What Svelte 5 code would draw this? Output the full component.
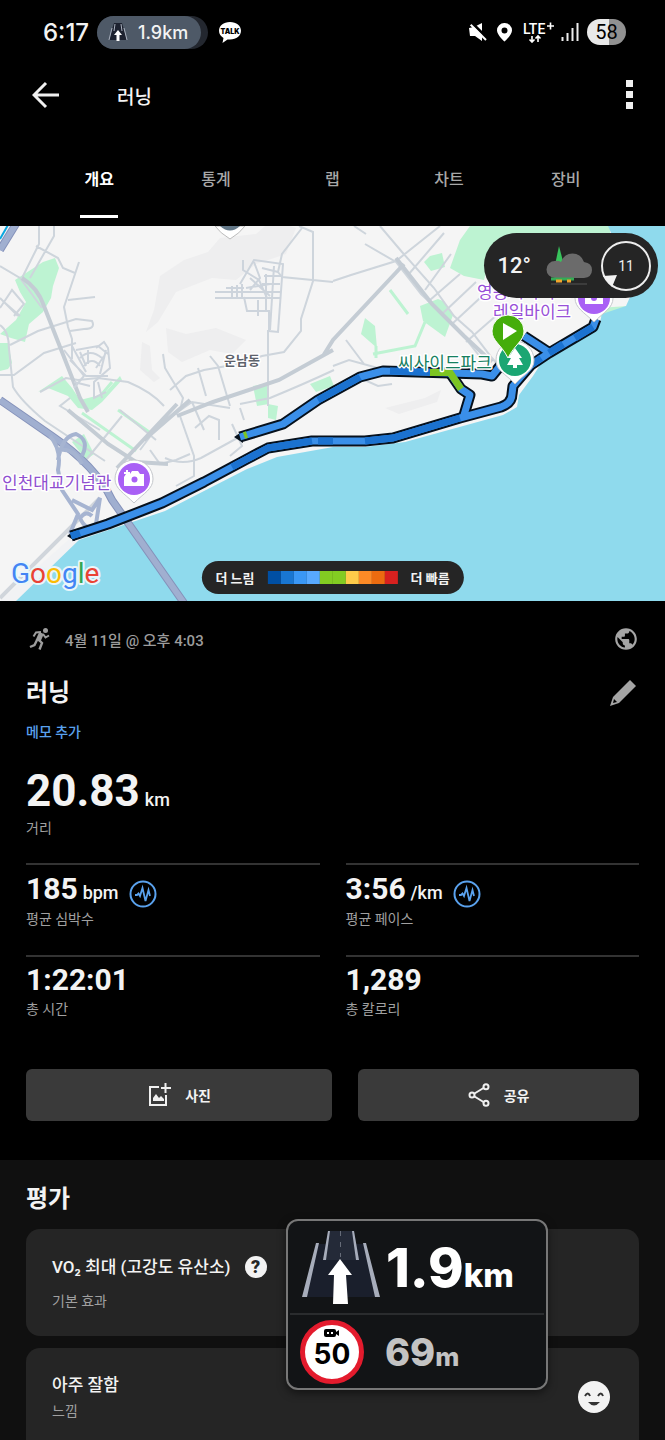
<script>
	let selected = 'overview';

	const tabs = [
		{ id: 'overview', label: '개요' },
		{ id: 'stats', label: '통계' },
		{ id: 'laps', label: '랩' },
		{ id: 'charts', label: '차트' },
		{ id: 'gear', label: '장비' }
	];

	const paceColors = ['#004fa3', '#1976d2', '#3a97f5', '#58a9ff', '#83cc22', '#83cc22', '#fecb4a', '#fd8a26', '#eb6b10', '#d7211f'];

	const stats = [
		{ value: '185', unit: 'bpm', label: '평균 심박수', chart: true },
		{ value: '3:56', unit: '/km', label: '평균 페이스', chart: true },
		{ value: '1:22:01', label: '총 시간' },
		{ value: '1,289', label: '총 칼로리' }
	];

	// route pieces, drawn once in black and again in the pace colour
	const shoreRoute = 'M71 536 L108 524 L162 503 L204 482 L247 459 L268 448 L312 441 L365 441 L393 438 L460 418 L501 407 Q512 403 512 394 L513 386 L531 365 L549 353 L593 327 L596 319';
	const innerRoute = 'M240 437 L283 424 L318 400 L360 377 L383 371 L450 373 L482 374 L492 376 L500 366';
	const linkRoute = 'M450 373 L461 389 L470 395 L464 415';
	const northRoute = 'M524 336 L550 353';
</script>

<svelte:head>
	<title>러닝</title>
</svelte:head>

<div class="screen">
	<div class="status">
		<span class="clock">6:17</span>
		<div class="chip">
			<div class="chip-inner">
				<svg width="20" height="20" viewBox="0 0 20 20">
					<path d="M6 1h8l5 17H1z" fill="#1d2230" />
					<path d="M4 6L1 18M16 6l3 12M7 2L6 9M13 2l1 7" stroke="#aab2bf" fill="none" />
					<path d="M10 8l4 5h-2.500v6h-3v-6H6z" fill="#fff" />
				</svg>
				<span>1.9km</span>
			</div>
		</div>
		<svg class="talk" width="24" height="24" viewBox="0 0 24 24">
			<path d="M12 2C5.500 2 1 5.800 1 10.800c0 3 1.800 5.600 4.500 7.200L4.500 23l5-3.600c.8.1 1.600.2 2.500.2 6.500 0 11-3.900 11-8.800S18.500 2 12 2z" fill="#fff" />
			<text x="12" y="14" text-anchor="middle" font-size="7" font-weight="900">TALK</text>
		</svg>
		<div class="status-right">
			<svg width="20" height="20" viewBox="0 0 20 20">
				<path d="M1 6l5-1 8-4v18l-7-5H2z" fill="#fff" />
				<path d="M3 0l17 17" stroke="#000" stroke-width="3" />
				<path d="M1 1l17 17" stroke="#fff" stroke-width="2" />
				<path d="M0 0h6l-6 5z" fill="#000" />
			</svg>
			<svg width="17" height="20" viewBox="0 0 17 20">
				<path d="M8.500 1A7.300 7.300 0 0 0 1 8.500C1 13 8.500 19.500 8.500 19.500S16 13 16 8.500A7.300 7.300 0 0 0 8.500 1zm0 4.500a3 3 0 1 1 0 6 3 3 0 0 1 0-6z" fill="#fff" />
			</svg>
			<svg class="network" width="32" height="22" viewBox="0 0 32 22">
				<text x="0" y="13" fill="#fff" font-size="14" font-weight="500">LTE</text>
				<path d="M24 5h7M27.500 1.500v7" stroke="#fff" stroke-width="1.600" />
				<path d="M9 15v6M6.500 18.500L9 21l2.500-2.500M15 21v-6M12.500 17.500L15 15l2.500 2.500" stroke="#fff" stroke-width="1.600" fill="none" />
			</svg>
			<svg width="18" height="20" viewBox="0 0 18 20">
				<path d="M1.500 15v4M6.500 11v8M11.500 6v13M16.500 1v18" stroke="#eee" stroke-width="2" />
			</svg>
			<span class="battery">58</span>
		</div>
	</div>

	<header class="appbar">
		<button class="icon-btn" aria-label="뒤로">
			<svg width="28" height="28" viewBox="0 0 28 28">
				<path d="M27 14H3M14 2L2 14l12 12" stroke="#f0f0f0" stroke-width="3" fill="none" />
			</svg>
		</button>
		<span class="page-title">러닝</span>
		<button class="icon-btn more" aria-label="더보기">
			<svg width="7" height="30" viewBox="0 0 7 30">
				<path d="M0 0h7v7H0zM0 11h7v7H0zM0 22h7v7H0z" fill="#f0f0f0" />
			</svg>
		</button>
	</header>

	<nav class="tabs">
		{#each tabs as tab}
			<button class:active={selected === tab.id} on:click={() => (selected = tab.id)}>{tab.label}</button>
		{/each}
	</nav>

	<section class="map">
		<svg class="map-art" viewBox="0 226 665 375" preserveAspectRatio="xMidYMid slice">
			<path d="M0 226h665v375H0z" fill="#f5f5f5" />
			<!-- hills -->
			<g fill="#eeeeef">
				<path d="M220 238l-12 14-24 8-24 16-6 34-8 22 12-10 18-30 36-14 24 2 20-16 30-10 10-26-24-8-16 14z" />
				<path d="M166 328l20 6 30-6 30 12-14 14-22-4-28 12-14-10zM142 342l8 4 2 24 8 8-6 4-14-12z" />
				<path d="M385 408l40-10 16-8-4 12-38 12z" />
			</g>
			<!-- parks -->
			<g fill="#bdf3d2">
				<path d="M15 280l28-18 12-4 4 10-6 18-2 12-8 14-14 12-4 18-14-4-11-4 16-14 10-18-6-10z" />
				<path d="M0 343l8 0 4 20-4 6-8 2zM38 392l24-16 10 12 8 12 24-6 16-18 2 4-20 22-10 8-14-2-10-12-20-8z" />
				<path d="M253 386l15-3 1 21-12 2zM310 384l20-8 4 10-18 6zM268 404l10 2-2 14-8-2zM72 442l12-8 10 20-8 6z" />
				<path d="M470 226h140v20l-120 10-6 24-20-4-14-8 10-28zM430 256l12-3 3 14-14 4-7-9zM420 306l18-7 5 2 10 14-8 22-22-16zM365 318l10 8 2 22-16-14zM598 308l30-2-4 12-20 6z" />
			</g>
			<g fill="none" stroke="#bdf3d2" stroke-width="3">
				<path d="M82 413l54 38M118 410l34 24M376 346v12M390 290l18 24M425 322l-10 24-42 8M92 406l20-24" />
			</g>
			<!-- water -->
			<path d="M608 226h57v375H12l61-59 92-31 82-42 30-12 56-10h32l40-5 98-27 14-8 2-12 14-19 14-22 53-32 2-8 24-8 9-20z" fill="#8fdaed" />
			<path d="M0 601l74-66 6 4-64 62z" fill="#f1f2f4" />
			<path d="M0 598l100-100" stroke="#d0d5db" stroke-width="4" />
			<!-- streets -->
			<g fill="none" stroke="#ced5dc" stroke-width="2">
				<path d="M39 226v18l-13 26-4 8M54 226v10l-16 28-8 14M36 246l22 12 5 10 12 5M79 262l-15 45 4 20 4 12v20M68 300l27-3M0 266l20 12 22 30M0 298l18 18M0 308l12-18 12 14-10 12M20 316l-16-14" />
				<path d="M0 325q9 6 9 24l4 38q8 14 32 34l60 40M10 345l28-14 38-12 16 2q4 8-8 8l-14 2M0 375l14 0 30-22 32-10M40 392l26-14 12 2 20-2 30 4q24 10 36 24" />
				<path d="M163 354l2 14 18 30-2 8M170 390l16-14 18-6 34-6 24-8 22-4 17-21v-12l12-38V232l-14-6M198 368l8 28M210 356l8 10 12 40M302 228l-20 26-4 18 4 5 51 5M268 330v76M334 370q-30 14-64 28l-30 6" />
				<path d="M380 226l22 26 32 36 20 28 18 16 20 26 14 16M333 281l18-6 45-14 44-35M365 244l31 18 25 32 36 34 24 30M408 275l36-42M425 290l26-36M430 300l30-26M442 314l34-32M452 324l28-26M466 342l32-28M354 226l12 8M346 340l18 24M333 366l16-6 36 10M360 378l18 8 14-2" />
				<path d="M120 410l36 30M140 450l18-24 34-24 38 6M192 402l12 28M232 424l10 22-12 10M240 408l4 12M150 450l10 14 16-4 14-6M165 458q18 8 36 0l40-22" />
				<path d="M180 416l14 40v20l-18 10M195 428l14-12 10 4v20M86 460l36-44M100 430l-40-24 10-8" />
			</g>
			<g fill="none" stroke="#c4ccd4" stroke-width="4">
				<path d="M22 278q16 10 22 28l36 92 8 14M333 350l-54 30-66 22-36 14M404 264l-71 76-10 16M396 258l36 46 32 32 28 26M177 404l-60 64M68 410l40 34 28 18 32 2M190 400l-46 40" />
			</g>
			<!-- dense blocks -->
			<g fill="none" stroke="#cdd4dc" stroke-width="2">
				<path d="M215 292h65M215 298h66M226 288h18M232 286v12M237 285v12M242 284v14M240 284l14-24 29 4-5 68-9-1 0-20h-22l-3-14M243 260v10l16 10 8 18M254 262l6 16-10 12M262 268l16 4M264 276h18M262 284h18M248 292h20M258 300v16M266 274v38M274 266l-4 64M250 278l20 18M246 288l24-4" />
				<path d="M64 350l20 26-10 12M72 346l14 26M76 350l22-4 10 8M80 358q10-10 22 0M84 366q8-10 16 0M96 348l8-6 4 6 2 20-16 14v16l12-6M80 352l6 14M88 350v14M104 356l-8 12M70 360l16 16 22 0M74 382l16 4M98 382l4 16M106 350l-6 24" />
			</g>
			<!-- expressway -->
			<g fill="none" stroke="#8592ba" stroke-width="8">
				<path d="M0 400l52 36q44 30 60 64l72 103M0 250l16-26" />
			</g>
			<g fill="none" stroke="#a0afd0" stroke-width="6">
				<path d="M0 400l52 36q44 30 60 64l72 103M0 250l16-26" />
			</g>
			<g fill="none" stroke="#a6b4d1" stroke-width="4">
				<path d="M50 436q12 14 8 34l4 20 16 24-8 20M58 460q4-24 18-26 14 6 6 22M60 450q14-2 22 14M72 500l20 10 8-12-4 26q-10 8-16-6 6-8 12-2" />
			</g>
			<path d="M0 239l8-14" stroke="#0aa7e0" stroke-width="2" />

			<g fill="none" stroke="#06111d" stroke-width="11" stroke-linejoin="round">
				<path d={northRoute} />
				<path d={innerRoute} />
				<path d={linkRoute} />
				<path d={shoreRoute} />
			</g>
			<path d="M67 536l8-6v11zM234 437l9-6v12z" fill="#06111d" />
			<g fill="none" stroke="#3a8fe9" stroke-width="7" stroke-linejoin="round">
				<path d={northRoute} />
				<path d={innerRoute} />
				<path d={linkRoute} />
				<path d={shoreRoute} />
			</g>
			<g fill="none" stroke="#1b72d0" stroke-width="7" stroke-linejoin="round">
				<path d="M232 467l15-8 21-11 44-7M318 441h15M365 441l28-3 67-20M318 400l42-23M390 371l40 1M549 353l14-9M531 365l10-7M71 536l9-3M575 338l18-11" />
			</g>
			<path d="M244 435.500l3-1M430 372.500h20l11 16.500" fill="none" stroke="#7cc523" stroke-width="7" />

			<!-- place labels -->
			<g class="label">
				<text x="2" y="489" fill="#8f4fd0">인천대교기념관</text>
				<text x="398" y="369" fill="#16805f">씨사이드파크</text>
				<text x="477" y="298" fill="#9850d8">영종씨사이드</text>
				<text x="493" y="318" fill="#9850d8">레일바이크</text>
				<text class="town" x="224" y="365" fill="#5d626b">운남동</text>
			</g>

			<!-- pins -->
			<path d="M215 226q5 7 15 13 10-6 15-13z" fill="#fff" stroke="#bbb" />
			<path d="M220 226q10 9 20 0z" fill="#637888" />
			<path d="M134 460a19 19 0 0 0-19 19c0 10 9 14 19 24 10-10 19-14 19-24a19 19 0 0 0-19-19z" fill="#fff" stroke="#c5c8cc" />
			<circle cx="134" cy="479" r="16" fill="#a960f5" />
			<path d="M126 474h4l2-3h6l2 3h4v12h-20v-9z" fill="#fff" />
			<path d="M127 470v6M124 473h6" stroke="#fff" stroke-width="2" />
			<circle cx="134.500" cy="479.500" r="3" fill="#a960f5" />
			<path d="M594 279a19 19 0 0 0-19 19c0 10 9 14 19 24 10-10 19-14 19-24a19 19 0 0 0-19-19z" fill="#fff" stroke="#c5c8cc" />
			<circle cx="594" cy="298" r="16" fill="#a960f5" />
			<path d="M585 293h18v11h-18z" fill="#fff" />
			<circle cx="594" cy="298" r="3" fill="#a960f5" />
			<path d="M515 341a19 19 0 0 0-19 19c0 11 9 13 19 24 10-11 19-13 19-24a19 19 0 0 0-19-19z" fill="#fff" stroke="#c5c8cc" />
			<circle cx="515" cy="360" r="16" fill="#1ba673" />
			<path d="M515 348l7 10h-3l4 7h-6v3h-4v-3h-6l4-7h-3z" fill="#fff" />
			<path d="M508 315a16 16 0 0 0-16 16c0 10 9 13 16 27 7-14 16-17 16-27a16 16 0 0 0-16-16z" fill="#45ad0b" stroke="#fff" />
			<path d="M503 323l14 8-14 9z" fill="#fff" />

			<text class="google" x="11" y="583"><tspan fill="#4285f4">G</tspan><tspan fill="#ea4335">o</tspan><tspan fill="#fbbc05">o</tspan><tspan fill="#4285f4">g</tspan><tspan fill="#34a853">l</tspan><tspan fill="#ea4335">e</tspan></text>
		</svg>

		<div class="weather">
			<span class="temp">12°</span>
			<svg width="46" height="40" viewBox="0 0 46 40">
				<path d="M13 0l5 19H9z" fill="#38c45c" />
				<path d="M9 32a8.500 8.500 0 0 1 0-17q3-1 6 1a12 12 0 0 1 23 0q8 1 8 8t-8 8z" fill="#6b6b6b" />
				<path d="M5 33h23" stroke="#35ab55" stroke-width="3" />
				<path d="M10 35h6M21 35h4" stroke="#f2a52d" stroke-width="3" />
				<path d="M5 38h36" stroke="#555" />
			</svg>
			<svg width="52" height="52" viewBox="0 0 52 52">
				<circle cx="26" cy="26" r="24" fill="none" stroke="#ededed" stroke-width="2" />
				<path d="M3 36l14-1-5 12z" fill="#f2f2f2" />
				<text x="26" y="31" text-anchor="middle" fill="#eee" font-size="14">11</text>
			</svg>
		</div>

		<div class="legend">
			<span>더 느림</span>
			<div class="scale">
				{#each paceColors as color}
					<i style="background: {color}"></i>
				{/each}
			</div>
			<span>더 빠름</span>
		</div>
	</section>

	<main class="summary">
		<div class="meta">
			<svg width="22" height="24" viewBox="0 0 22 24" fill="none" stroke="#9c9c9c">
				<circle cx="16.500" cy="3.500" r="2.500" fill="#9c9c9c" stroke="none" />
				<path d="M12.500 6L9 14" stroke-width="5" />
				<path d="M12 5L7 5.500l-2.500 4M14 7l2.500 3.500 3.500-2" stroke-width="2" />
				<path d="M9 12l4 4-2.500 6.500M8 13l-2.500 5L1 20" stroke-width="2.400" />
			</svg>
			<span class="date">4월 11일 @ 오후 4:03</span>
			<button class="icon-btn" aria-label="공개 범위">
				<svg width="26" height="26" viewBox="0 0 24 24" fill="#a5a5a5">
					<path d="M12 2C6.480 2 2 6.480 2 12s4.480 10 10 10 10-4.480 10-10S17.520 2 12 2zm-1 17.930c-3.950-.49-7-3.850-7-7.930 0-.62.080-1.210.210-1.790L9 15v1c0 1.100.9 2 2 2v1.930zm6.900-2.540c-.26-.81-1-1.390-1.900-1.390h-1v-3c0-.55-.45-1-1-1H8v-2h2c.55 0 1-.45 1-1V7h2c1.100 0 2-.9 2-2v-.41c2.930 1.190 5 4.060 5 7.410 0 2.080-.8 3.970-2.100 5.390z" />
				</svg>
			</button>
		</div>
		<div class="title-row">
			<h1>러닝</h1>
			<button class="icon-btn" aria-label="편집">
				<svg width="28" height="28" viewBox="0 0 28 28">
					<path d="M21 1l6 6-17 17-9 3 3-9z" fill="#a5a5a5" />
					<path d="M5 20l3 3-4 1z" fill="#000" />
				</svg>
			</button>
		</div>
		<a class="memo" href="#memo">메모 추가</a>

		<div class="distance">
			<p class="value">20.83<small>km</small></p>
			<p class="caption">거리</p>
		</div>

		<div class="stats">
			{#each stats as stat}
				<div class="stat">
					<p class="value">
						<span>{stat.value}{#if stat.unit}<small>{stat.unit}</small>{/if}</span>
						{#if stat.chart}
							<button class="icon-btn" aria-label="{stat.label} 차트">
								<svg width="28" height="28" viewBox="0 0 28 28" fill="none" stroke="#5aa2ee" stroke-width="2">
									<circle cx="14" cy="14" r="12.500" />
									<path d="M6 15h2l1.500-1.500L11 16l2.500-8 3 13 3-11 1.500 6" stroke-width="1.800" />
								</svg>
							</button>
						{/if}
					</p>
					<p class="caption">{stat.label}</p>
				</div>
			{/each}
		</div>

		<div class="actions">
			<button>
				<svg width="24" height="24" viewBox="0 0 24 24" fill="none" stroke="#f0f0f0" stroke-width="2">
					<path d="M12 4H3v18h16V12" />
					<path d="M18.500 0v10M14 5h10" />
					<path d="M6 18v-3l3-4 3 4 2-2 3 3v2z" fill="#f0f0f0" stroke="none" />
				</svg>
				<span>사진</span>
			</button>
			<button>
				<svg width="22" height="24" viewBox="0 0 22 24" fill="none" stroke="#f0f0f0" stroke-width="2">
					<circle cx="4" cy="12" r="2.500" />
					<circle cx="18" cy="3.700" r="2.500" />
					<circle cx="18" cy="20.300" r="2.500" />
					<path d="M6.500 10.500l9-5.500M6.500 13.500l9 5.500" />
				</svg>
				<span>공유</span>
			</button>
		</div>
	</main>

	<section class="rating">
		<h2>평가</h2>
		<div class="card">
			<div>
				<p class="card-title">
					<span>VO₂ 최대 (고강도 유산소)</span>
					<button class="help" aria-label="도움말">?</button>
				</p>
				<p class="caption">기본 효과</p>
			</div>
		</div>
		<div class="card last">
			<div>
				<p class="card-title">아주 잘함</p>
				<p class="caption">느낌</p>
			</div>
			<svg width="34" height="34" viewBox="0 0 34 34">
				<circle cx="17" cy="17" r="16" fill="#f3f3f3" />
				<path d="M8 16q3-5 5 0M21 16q3-5 5 0" stroke="#333" stroke-width="2" fill="none" />
				<path d="M11 22h12q-6 7-12 0z" fill="#333" />
			</svg>
		</div>
	</section>

	<aside class="guide">
		<div class="guide-row turn">
			<svg width="80" height="78" viewBox="0 0 80 78">
				<path d="M17 16h46l15 53H2z" fill="#1a1f2c" />
				<path d="M27 3h26l5 29H22z" fill="#242a38" />
				<path d="M15 15h3L6 69H1zM62 15h3l14 54h-5z" fill="#a7adbb" />
				<path d="M27 3h2l-4 29h-3zM51 3h2l5 29h-3z" fill="#a7adbb" />
				<path d="M39.500 3v26" stroke="#666c79" stroke-dasharray="5 6" />
				<path d="M39 31l12 16h-6l2 29H32l1-29h-6z" fill="#fff" />
			</svg>
			<p>1.9<small>km</small></p>
		</div>
		<div class="guide-row camera">
			<svg width="66" height="66" viewBox="0 0 66 66">
				<circle cx="33" cy="33" r="29.500" fill="#fff" stroke="#e31b2d" stroke-width="5" />
				<rect x="25" y="10" width="12" height="8" rx="2" />
				<path d="M37 13l3-2v6l-3-2z" />
				<path d="M28 13h2v2h-2zM32 13h2v2h-2z" fill="#fff" />
				<text x="33" y="45" text-anchor="middle" font-size="28" font-weight="700">50</text>
			</svg>
			<p>69<small>m</small></p>
		</div>
	</aside>
</div>

<style>
	:global(body) {
		margin: 0;
		background: #000;
	}
	.screen {
		position: relative;
		display: flex;
		flex-direction: column;
		min-height: 100vh;
		background: #000;
		color: #f3f3f3;
		font-family: Roboto, "Noto Sans CJK KR", sans-serif;
	}
	svg {
		display: block;
		flex: none;
	}
	p, h1, h2 {
		margin: 0;
	}
	button {
		font: inherit;
		color: inherit;
		background: none;
		border: 0;
		padding: 0;
		cursor: pointer;
	}

	.status {
		display: flex;
		align-items: center;
		height: 64px;
		padding: 0 39px 0 43px;
		font-family: Inter, sans-serif;
	}
	.clock {
		font-size: 24px;
		font-weight: 500;
	}
	.chip {
		margin-left: 8px;
		padding-right: 7px;
		border-radius: 17px;
		background: #23272f;
	}
	.chip-inner {
		display: flex;
		align-items: center;
		gap: 10px;
		height: 33px;
		padding: 0 13px 0 11px;
		border-radius: 17px;
		background: #4e5967;
		font-size: 18px;
		font-weight: 500;
	}
	.talk {
		margin-left: 10px;
	}
	.status-right {
		display: flex;
		align-items: center;
		gap: 8px;
		margin-left: auto;
		font-family: Roboto, sans-serif;
	}
	.network {
		margin: 0 -2px 0 2px;
	}
	.battery {
		width: 39px;
		border-radius: 13px;
		background: linear-gradient(90deg, #e8e8e8 57%, #919191 57%);
		color: #000;
		font-size: 20px;
		line-height: 26px;
		text-align: center;
	}

	.appbar {
		display: flex;
		align-items: center;
		height: 62px;
		padding: 0 32px;
	}
	.page-title {
		margin-left: 57px;
		font-size: 19px;
		font-weight: 500;
	}
	.more {
		margin-left: auto;
	}

	.tabs {
		display: flex;
		height: 92px;
		padding: 0 41px;
		margin-bottom: 8px;
	}
	.tabs button {
		position: relative;
		flex: 1;
		padding-top: 12px;
		font-size: 16px;
		font-weight: 500;
		color: #a8a8a8;
	}
	.tabs .active {
		color: #fff;
		font-weight: 700;
	}
	.tabs .active::after {
		content: "";
		position: absolute;
		bottom: 0;
		left: 50%;
		width: 38px;
		height: 3px;
		margin-left: -19px;
		background: #fff;
	}

	.map {
		position: relative;
	}
	.map-art {
		width: 100%;
	}
	.label text {
		font-size: 17px;
		font-weight: 400;
		stroke: #fff;
		stroke-width: 3px;
		stroke-linejoin: round;
		paint-order: stroke;
	}
	.label .town {
		font-size: 13px;
		font-weight: 700;
	}
	.google {
		font-size: 28px;
		font-weight: 400;
		stroke: #e8f6fa;
		stroke-width: 4px;
		stroke-linejoin: round;
		paint-order: stroke;
	}
	.weather {
		position: absolute;
		top: 7px;
		right: 7px;
		display: flex;
		align-items: center;
		height: 65px;
		padding: 0 6px 0 14px;
		border-radius: 33px;
		background: #252525;
	}
	.temp {
		margin-right: 15px;
		font-size: 22px;
		font-weight: 500;
	}
	.weather svg + svg {
		margin-left: 8px;
	}
	.legend {
		position: absolute;
		bottom: 7px;
		left: 50%;
		transform: translateX(-50%);
		display: flex;
		align-items: center;
		gap: 13px;
		height: 33px;
		padding: 0 14px;
		border-radius: 17px;
		background: #252525;
		font-size: 13px;
		font-weight: 700;
		white-space: nowrap;
	}
	.scale {
		display: flex;
	}
	.scale i {
		width: 13px;
		height: 13px;
	}

	.summary {
		padding: 24px 26px 39px;
	}
	.meta {
		display: flex;
		align-items: center;
		height: 28px;
		padding-left: 3px;
		color: #9c9c9c;
	}
	.date {
		margin-left: 14px;
		font-size: 15px;
		font-weight: 500;
	}
	.meta .icon-btn,
	.title-row .icon-btn {
		margin-left: auto;
	}
	.title-row {
		display: flex;
		align-items: center;
		height: 36px;
		margin-top: 22px;
		padding-right: 2px;
	}
	h1, h2 {
		font-size: 24px;
		line-height: 36px;
		font-weight: 700;
	}
	.memo {
		display: inline-block;
		margin-top: 10px;
		color: #5aa2ee;
		font-size: 14px;
		line-height: 22px;
		font-weight: 500;
		text-decoration: none;
	}
	.value {
		font-weight: 700;
	}
	.value small {
		margin-left: 5px;
		font-size: 18px;
		line-height: 18px;
		font-weight: 500;
	}
	.caption {
		color: #a0a0a0;
		font-size: 14px;
		line-height: 22px;
	}
	.distance {
		margin-top: 22px;
	}
	.distance .value {
		font-size: 44px;
		line-height: 52px;
	}
	.stats {
		display: grid;
		grid-template-columns: 1fr 1fr;
		column-gap: 26px;
		margin-top: 24px;
	}
	.stat {
		height: 87px;
		padding-top: 3px;
		border-top: 2px solid #333;
	}
	.stat .value {
		display: flex;
		align-items: center;
		gap: 10px;
		min-height: 38px;
		font-size: 30px;
	}
	.stat .icon-btn {
		padding-top: 12px;
	}
	.actions {
		display: grid;
		grid-template-columns: 12fr 11fr;
		gap: 26px;
		margin-top: 22px;
	}
	.actions button {
		display: flex;
		align-items: center;
		justify-content: center;
		gap: 14px;
		height: 52px;
		border-radius: 6px;
		background: #3a3a3a;
		font-size: 14px;
		font-weight: 700;
	}

	.rating {
		display: flex;
		flex: 1;
		flex-direction: column;
		padding: 21px 26px 0;
		background: #101010;
	}
	.card {
		display: flex;
		justify-content: space-between;
		margin-top: 12px;
		padding: 25px 26px 24px;
		border-radius: 14px;
		background: #252525;
	}
	.card-title {
		display: flex;
		align-items: center;
		gap: 14px;
		font-size: 17px;
		line-height: 26px;
		font-weight: 500;
	}
	.card .caption {
		margin-top: 10px;
	}
	.help {
		width: 22px;
		border-radius: 11px;
		background: #f3f3f3;
		color: #252525;
		font-size: 18px;
		line-height: 22px;
		font-weight: 900;
	}
	.card.last {
		flex: 1;
		padding: 24px 28px 6px 26px;
		border-radius: 14px 14px 0 0;
	}
	.last .caption {
		margin-top: 2px;
	}
	.last svg {
		margin-top: 8px;
	}

	.guide {
		position: absolute;
		bottom: 50px;
		left: 43%;
		width: 258px;
		border: 2px solid #777;
		border-radius: 12px;
		background: #121416;
		box-shadow: 0 3px 8px rgba(0, 0, 0, 0.5);
		color: #fff;
		font-family: Inter, sans-serif;
		font-weight: 800;
	}
	.guide-row {
		display: flex;
		align-items: center;
	}
	.turn {
		gap: 5px;
		height: 92px;
		margin: 0 2px;
		padding-left: 11px;
		border-bottom: 2px solid #2a2c2e;
		font-size: 54px;
	}
	.turn small {
		font-size: 33px;
	}
	.camera {
		gap: 20px;
		height: 73px;
		padding-left: 11px;
		font-size: 38px;
	}
	.camera p {
		color: #c3c3c3;
	}
	.camera small {
		font-size: 26px;
	}
</style>
